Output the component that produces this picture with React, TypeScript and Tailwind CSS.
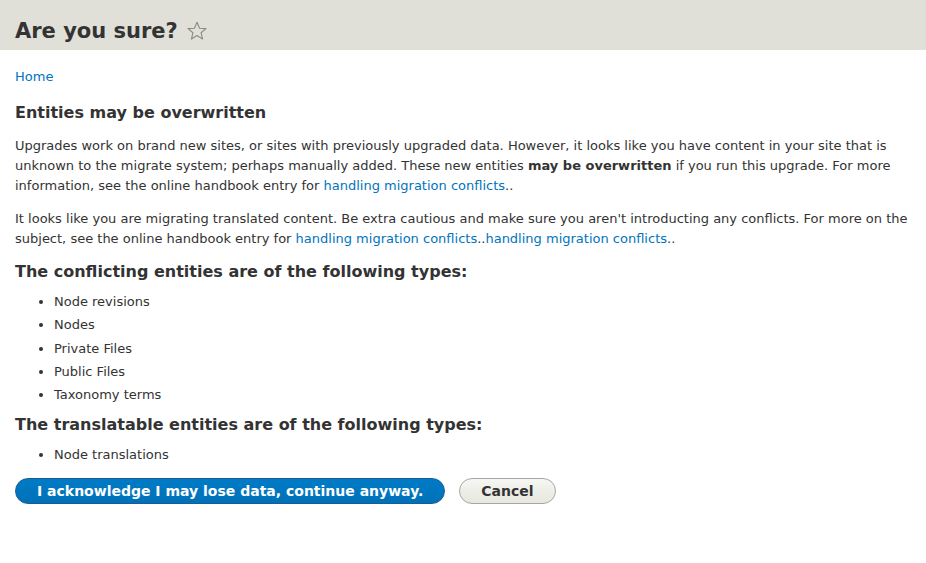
export default function App() {
  const font = { fontFamily: '"DejaVu Sans", "Liberation Sans", sans-serif' };
  return (
    <div className="min-h-[563px] bg-white text-[13px] leading-[20px] text-[#333]" style={font}>
      <div className="h-[50px] bg-[#e0e0d8] px-[15px] pt-[18px]">
        <div className="flex items-center">
          <h1 className="text-[21px] font-bold leading-[26px] text-[#333]">Are you sure?</h1>
          <svg className="ml-[8px]" width="22" height="22" viewBox="0 0 24 24" fill="none" stroke="#8a8a80" strokeWidth="1.2" strokeLinejoin="round">
            <polygon points="12,2.5 14.8,9 21.8,9.4 16.4,13.9 18.1,20.8 12,17 5.9,20.8 7.6,13.9 2.2,9.4 9.2,9" />
          </svg>
        </div>
      </div>
      <div className="px-[15px]">
        <div className="mt-[17px]">
          <a className="text-[#0074bd]" href="#">Home</a>
        </div>
        <h2 className="mt-[16px] text-[16px] font-bold leading-[20px]">Entities may be overwritten</h2>
        <p className="mt-[13px]">
          Upgrades work on brand new sites, or sites with previously upgraded data. However, it looks like you have content in your site that is unknown to the migrate system; perhaps manually added. These new entities <strong className="font-bold">may be overwritten</strong> if you run this upgrade. For more information, see the online handbook entry for <a className="text-[#0074bd]" href="#">handling migration conflicts</a>..
        </p>
        <p className="mt-[13px]">
          It looks like you are migrating translated content. Be extra cautious and make sure you aren't introducting any conflicts. For more on the subject, see the online handbook entry for <a className="text-[#0074bd]" href="#">handling migration conflicts</a>..<a className="text-[#0074bd]" href="#">handling migration conflicts</a>..
        </p>
        <h3 className="mt-[13px] text-[16px] font-bold leading-[20px]">The conflicting entities are of the following types:</h3>
        <ul className="mt-[10px] list-disc pl-[39px]">
          <li className="mt-[3px]">Node revisions</li>
          <li className="mt-[3.3px]">Nodes</li>
          <li className="mt-[3.3px]">Private Files</li>
          <li className="mt-[3.3px]">Public Files</li>
          <li className="mt-[3.3px]">Taxonomy terms</li>
        </ul>
        <h3 className="mt-[10px] text-[16px] font-bold leading-[20px]">The translatable entities are of the following types:</h3>
        <ul className="mt-[10px] list-disc pl-[39px]">
          <li className="mt-[3px]">Node translations</li>
        </ul>
        <div className="mt-[13px] flex items-center gap-[14px]">
          <button className="h-[26px] rounded-full border border-[#1e5c90] bg-gradient-to-b from-[#007bc6] to-[#0071b8] px-[21px] text-[14px] font-bold leading-[20px] text-white">
            I acknowledge I may lose data, continue anyway.
          </button>
          <button className="h-[26px] rounded-full border border-[#a6a6a6] bg-gradient-to-b from-[#f6f6f3] to-[#e7e7df] px-[21px] text-[14px] font-bold leading-[20px] text-[#333]">
            Cancel
          </button>
        </div>
      </div>
    </div>
  );
}
